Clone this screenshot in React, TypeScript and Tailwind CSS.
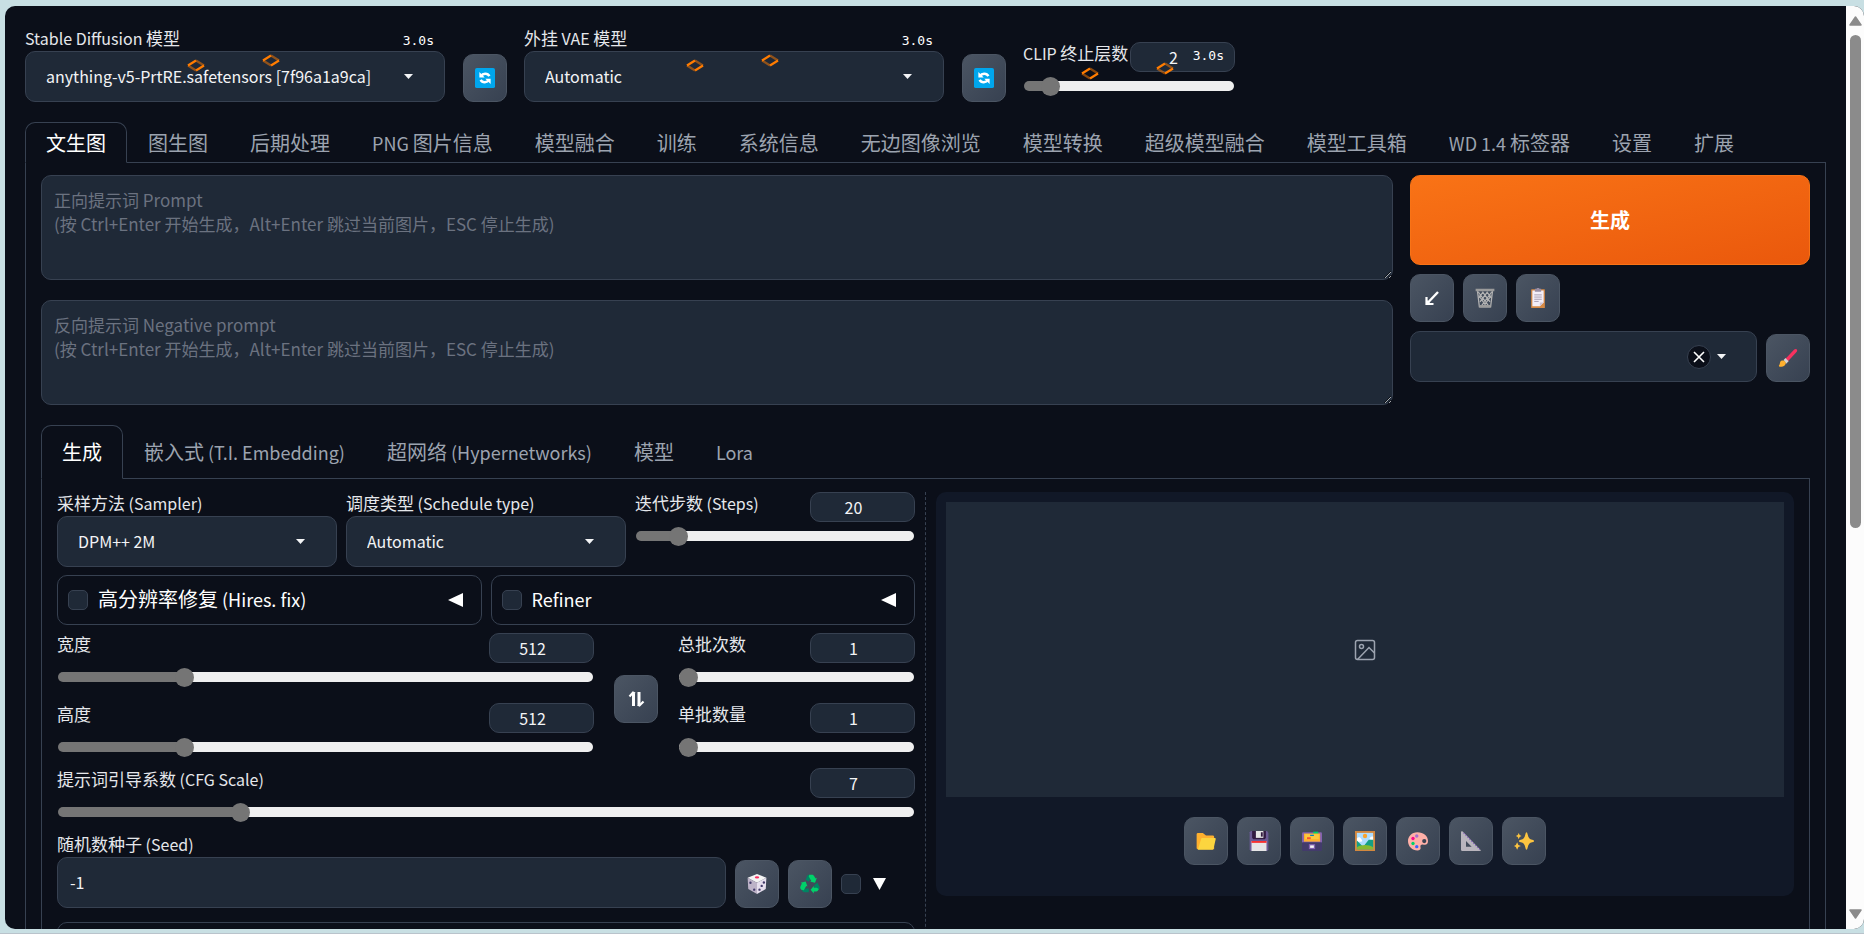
import { type ReactNode, useId, useState } from 'react'

const LATIN = /([\x20-\x7e]+)/

interface MixedProps {
  text: string
  latin?: string
}

// Latin runs sit a touch smaller than the Chinese characters around them
function Mixed({ text, latin = 'text-[16px]' }: MixedProps) {
  return (
    <>
      {text.split(LATIN).map((part, i) =>
        LATIN.test(part) ? (
          <span key={i} className={`${latin} whitespace-pre`}>
            {part}
          </span>
        ) : (
          part
        ),
      )}
    </>
  )
}

function RefreshIcon() {
  return (
    <svg viewBox="0 0 32 32" className="size-5">
      <rect width="32" height="32" rx="3" fill="#00a6ed" />
      <g fill="none" stroke="#fff" strokeWidth="4">
        <path d="M10 12.5C12 9 20 7.500 23 13" />
        <path d="M22 19.500C20 23 12 24.500 9 19" />
      </g>
      <path d="M7 6.500V15h8.500zM25 25.500V17h-8.500z" fill="#fff" />
    </svg>
  )
}

function ArrowDownLeftIcon() {
  return (
    <svg viewBox="0 0 20 20" className="size-5" fill="none" stroke="#fff" strokeWidth="2.400">
      <path d="M16 4L6 14.500" />
      <path d="M4.500 9v7h7" strokeWidth="2.200" />
      <path d="M4 11v5.500h5.500z" fill="#fff" stroke="none" />
    </svg>
  )
}

function TrashIcon() {
  return (
    <svg viewBox="0 0 32 32" className="size-5" fill="none" stroke="#b4b4b4" strokeWidth="2">
      <path d="M4 5l3 25h18l3-25" />
      <path d="M6 12l12 17M5 6l17 23M12 6l12 16M19 6l7 10M26 12L14 29M27 6L10 29M20 6L8 22M13 6L6 16" />
      <path d="M1 3h30M7 29h18" strokeWidth="4" stroke="#9b9b9b" />
    </svg>
  )
}

function ClipboardIcon() {
  return (
    <svg viewBox="0 0 32 32" className="size-5">
      <rect x="5" y="2" width="22" height="30" rx="1" fill="#d68a45" />
      <path d="M7 4h18v19l-6 6H7z" fill="#f3eef8" />
      <path d="M25 23l-6 6v-6z" fill="#cdc4d6" />
      <path d="M11 1h3a2 2 0 0 1 4 0h3v5H11z" fill="#998ea4" />
      <path d="M10 11h12M10 14.500h12M10 18h12M10 21.500h7" stroke="#998ea4" strokeWidth="1.300" />
    </svg>
  )
}

function BrushIcon() {
  return (
    <svg viewBox="0 0 32 32" className="size-5">
      <path d="M12 17L26 2.500c3-2.500 6 .5 4 3.500L16 21z" fill="#f8315f" />
      <path d="M9 19l3-3 5 5-4 4z" fill="#d3d3d3" />
      <path d="M3 30c-2-1-2-2-1-3 2-2 0-5 4-7 4-1 8 3 6 6-2 4-6 4-9 4z" fill="#ffb02e" />
    </svg>
  )
}

function SwapIcon() {
  return (
    <svg viewBox="0 0 20 20" className="size-5" fill="none" stroke="#fff" strokeWidth="3">
      <path d="M7.500 17V5M13 3v12" />
      <path d="M3.500 7.500l3.500-4 2 1M11.500 15.500l2 1 4-4" strokeWidth="2.200" />
    </svg>
  )
}

function DiceIcon() {
  return (
    <svg viewBox="0 0 32 32" className="size-5">
      <path d="M16 0l15 6-15 8L1 6z" fill="#f4f4f4" />
      <path d="M1 6l15 8v18L2 24z" fill="#bdb3c8" />
      <path d="M31 6l-15 8v18l14-8z" fill="#e6dfee" />
      <ellipse cx="16" cy="5.500" rx="3.500" ry="1.800" fill="#f92f60" />
      <g fill="#433b6b">
        <circle cx="5.500" cy="14" r="1.900" />
        <circle cx="11.500" cy="25" r="1.900" />
        <circle cx="27" cy="13.500" r="1.900" />
        <circle cx="23.500" cy="19" r="1.900" />
        <circle cx="20" cy="25" r="1.900" />
      </g>
    </svg>
  )
}

function RecycleIcon() {
  return (
    <svg viewBox="0 0 32 32" className="size-5">
      <path d="M9 9l3-7c1-1 2-1 4-1l3 1-5 10z" fill="#008463" />
      <path d="M15 1h4c2 0 3 1 4 3l2 3 2-1-3 8-8-2 2-1-4-7z" fill="#00d26a" />
      <path d="M23 17l5-3 3 6c1 2 0 4-2 6l-6-1z" fill="#008463" />
      <path d="M30 24c-1 2-2 4-4 4h-4v3l-5-6 5-6v3h5z" fill="#00d26a" />
      <path d="M4 23h10v6H7c-2 0-3-1-4-3z" fill="#008463" />
      <path d="M2 25c-2-2-2-4-1-6l2-4-2-1 8-2 3 8-2-1-4 7z" fill="#00d26a" />
    </svg>
  )
}

function FolderIcon() {
  return (
    <svg viewBox="0 0 32 32" className="size-5">
      <path d="M1 5c0-1 1-2 2-2h8l5 4h11c1 0 2 1 2 2v20H3c-1 0-2-1-2-2z" fill="#ffb02e" />
      <path d="M8 13c0-1 1-2 2-2h20c1 0 2 1 1.500 2L28 28c0 1-1 2-2 2H3z" fill="#fcd53f" />
    </svg>
  )
}

function FloppyIcon() {
  return (
    <svg viewBox="0 0 32 32" className="size-5">
      <path d="M3 0h26l2 3v27l-2 2H3l-2-2V2z" fill="#6b5b95" />
      <path d="M5 0h22v11l-2 2H7l-2-2z" fill="#321b41" />
      <path d="M11 0h12v11H11z" fill="#e6e6e6" />
      <path d="M19 2h3v7h-3z" fill="#321b41" />
      <path d="M4 16h24v16H4z" fill="#e6e6e6" />
      <path d="M4 16h24v3H4z" fill="#f8312f" />
    </svg>
  )
}

function CardBoxIcon() {
  return (
    <svg viewBox="0 0 32 32" className="size-5">
      <rect y="2" width="32" height="17" rx="2" fill="#8361b0" />
      <path d="M18 1h8v4h-8z" fill="#00d26a" />
      <path d="M3 4h26v13H3z" fill="#ffb02e" />
      <path d="M5 5h22v8H5z" fill="#fcc93f" />
      <path d="M13 6h6v2h-6z" fill="#0084ce" />
      <path d="M8 10h6v3H8z" fill="#f8512f" />
      <rect y="18" width="32" height="14" rx="2" fill="#433b6b" />
      <rect x="11" y="21" width="10" height="8" fill="#8361b0" />
      <path d="M13 23h6v4h-6z" fill="#f4f4f4" />
    </svg>
  )
}

function PictureIcon() {
  return (
    <svg viewBox="0 0 32 32" className="size-5">
      <path d="M0 0h32v32H0z" fill="#d3883e" />
      <path d="M3 3h26v26H3z" fill="#aeddff" />
      <path d="M3 12c2-3 6-2 7 1 2 1 2 3 0 4H3zM29 9c-3-1-5 1-6 4l6 2z" fill="#fff" />
      <circle cx="16" cy="8" r="3.500" fill="#f9a32e" />
      <path d="M3 15l10 10 9-11h7v15H3z" fill="#14a085" />
      <path d="M3 26c7-5 19-5 26 0v3H3z" fill="#86b932" />
    </svg>
  )
}

function PaletteIcon() {
  return (
    <svg viewBox="0 0 32 32" className="size-5">
      <path d="M15 2C6 2 0 9 0 16c0 9 7 15 15 15 4 0 6-2 5-5-1-4 2-5 5-4 5 1 7-2 7-6C32 8 25 2 15 2z" fill="#ffb0a8" />
      <circle cx="26" cy="16" r="3.400" fill="#3b4252" />
      <circle cx="14" cy="8" r="2.700" fill="#a56dcf" />
      <circle cx="8" cy="12" r="2.700" fill="#f70a8d" />
      <circle cx="8" cy="20" r="2.700" fill="#00d26a" />
      <circle cx="14" cy="25" r="2.700" fill="#3f5fff" />
    </svg>
  )
}

function TriangleRulerIcon() {
  return (
    <svg viewBox="0 0 32 32" className="size-5">
      <path d="M0 2c0-2 2-2 3-1l28 29c1 1 1 2-1 2H2c-1 0-2-1-2-2zM8 16v9h9z" fill="#b9b5bd" fillRule="evenodd" />
      <path d="M4 3l26 27" stroke="#8d65c5" strokeWidth="1.800" strokeDasharray="2 2.500" />
    </svg>
  )
}

function SparklesIcon() {
  return (
    <svg viewBox="0 0 32 32" className="size-5" fill="#fcc440">
      <path d="M20 2c1 0 1 1 2 4 1 5 3 7 7 8 3 1 3 1 3 2s0 1-3 2c-4 1-6 3-7 8-1 3-1 4-2 4s-1-1-2-4c-1-5-3-7-7-8-3-1-3-1-3-2s0-1 3-2c4-1 6-3 7-8 1-3 1-4 2-4z" />
      <path d="M7.500 3l1.500 3.500L12 8l-3 1.500L7.500 13 6 9.500 3 8l3-1.500zM5 18l2 4.500 4 1.500-4 1.500L5 30l-2-4.500L0 24l3-1.500z" />
    </svg>
  )
}

function Caret() {
  return (
    <svg viewBox="0 0 9 5" className="pointer-events-none h-[5px] w-[9px]">
      <path d="M0 0h9L4.500 5z" fill="#f3f4f6" />
    </svg>
  )
}

function LoaderMark({ className }: { className: string }) {
  return (
    <svg viewBox="0 0 18 13" className={`absolute h-[13px] w-[18px] ${className}`} fill="none" strokeWidth="2.200">
      <path d="M9 1.500l8 5M9 11.500l-8-5" stroke="#ff7c00" strokeOpacity="0.5" />
      <path d="M1 6.500L9 1.500M17 6.500l-8 5" stroke="#ff7c00" />
    </svg>
  )
}

// Two marks and the elapsed time, drawn over a component that is still loading
function Progress({ marks }: { marks: string }) {
  return (
    <div className="pointer-events-none absolute inset-0">
      <div className={`absolute left-1/2 ${marks}`}>
        <LoaderMark className="top-[5px] -left-[48px]" />
        <LoaderMark className="top-0 left-[27px]" />
      </div>
      <span className="absolute top-[6px] right-[11px] font-['DejaVu_Sans_Mono',monospace] text-[13px] leading-4 text-white">
        3.0s
      </span>
    </div>
  )
}

function ToolButton({ label, children }: { label: string; children: ReactNode }) {
  return (
    <button
      type="button"
      aria-label={label}
      className="flex h-12 w-11 shrink-0 items-center justify-center rounded-[10px] border border-[#4b5563] bg-linear-to-br from-[#4b5563] to-[#374151]"
    >
      {children}
    </button>
  )
}

const labelClass = 'block h-6 min-w-0 text-[17px] leading-[22px] whitespace-nowrap text-[#e5e7eb]'

interface DropdownProps {
  label: string
  value: string
  children?: ReactNode
}

function Dropdown({ label, value, children }: DropdownProps) {
  const id = useId()
  return (
    <div className="relative min-w-0 flex-1">
      <label htmlFor={id} className={labelClass}>
        <Mixed text={label} />
      </label>
      <div className="relative">
        <select
          id={id}
          className="block h-[51px] w-full appearance-none rounded-[10px] border border-[#374151] bg-[#1f2937] px-5 pb-[2px] text-[16px] text-[#f3f4f6]"
        >
          <option>{value}</option>
        </select>
        <div className="pointer-events-none absolute inset-y-0 right-8 flex items-center">
          <Caret />
        </div>
      </div>
      {children}
    </div>
  )
}

interface SliderProps {
  label: string
  min: number
  max: number
  initial: number
  className?: string
  children?: ReactNode
}

function Slider({ label, min, max, initial, className = '', children }: SliderProps) {
  const id = useId()
  const [value, setValue] = useState(initial)
  const percent = ((value - min) / (max - min)) * 100

  return (
    <div className={`relative ${className}`}>
      <div className="flex h-[30px] items-start justify-between">
        <label htmlFor={id} className={labelClass}>
          <Mixed text={label} />
        </label>
        <input
          type="number"
          aria-label={label}
          min={min}
          max={max}
          value={value}
          onChange={(e) => setValue(Number(e.target.value))}
          className="h-[30px] w-[105px] shrink-0 [appearance:textfield] rounded-[10px] border border-[#374151] bg-[#1f2937] pr-[18px] text-center text-[16px] text-[#f3f4f6] [&::-webkit-inner-spin-button]:appearance-none"
        />
      </div>
      <div className="mt-[9px] px-px">
        <input
          id={id}
          type="range"
          min={min}
          max={max}
          value={value}
          onChange={(e) => setValue(Number(e.target.value))}
          style={{
            backgroundImage: `linear-gradient(to right, #757575 ${percent}%, #efefef ${percent}%)`,
          }}
          className="block h-[10px] w-full appearance-none rounded-full [&::-webkit-slider-thumb]:size-[19px] [&::-webkit-slider-thumb]:appearance-none [&::-webkit-slider-thumb]:rounded-full [&::-webkit-slider-thumb]:bg-[#757575]"
        />
      </div>
      {children}
    </div>
  )
}

interface TabsProps {
  items: string[]
  tabClass: string
}

function Tabs({ items, tabClass }: TabsProps) {
  const [active, setActive] = useState(items[0])
  return (
    <div role="tablist" className="flex border-b border-[#374151]">
      {items.map((item) => (
        <button
          key={item}
          type="button"
          role="tab"
          aria-selected={item === active}
          onClick={() => setActive(item)}
          className={`-mb-px rounded-t-[10px] border px-5 text-[20px] whitespace-nowrap ${tabClass} ${
            item === active
              ? 'border-[#374151] border-b-[#0b0f19] text-white'
              : 'border-transparent text-[#9ca3af]'
          }`}
        >
          <Mixed text={item} latin="text-[18px]" />
        </button>
      ))}
    </div>
  )
}

const checkboxClass =
  'size-5 shrink-0 appearance-none rounded-[5px] border border-[#374151] bg-[#1f2937] checked:bg-[#ea580c]'

function Accordion({ title }: { title: string }) {
  return (
    <div className="flex h-[50px] flex-1 items-center rounded-[10px] border border-[#374151] px-[10px]">
      <label className="flex flex-1 items-center gap-[10px] text-[20px] text-white">
        <input type="checkbox" className={checkboxClass} />
        <span className="pb-[2px]">
          <Mixed text={title} latin="text-[18px]" />
        </span>
      </label>
      <button type="button" aria-label={title} className="px-2">
        <svg viewBox="0 0 15 14" className="h-[14px] w-[15px]">
          <path d="M15 0v14L0 7z" fill="#fff" />
        </svg>
      </button>
    </div>
  )
}

function Prompt({ name }: { name: string }) {
  return (
    <textarea
      aria-label={name}
      placeholder={`${name}\n(按 Ctrl+Enter 开始生成，Alt+Enter 跳过当前图片，ESC 停止生成)`}
      className="block h-[105px] w-full rounded-[10px] border border-[#374151] bg-[#1f2937] px-3 py-3 text-[17px] leading-6 text-[#f3f4f6] placeholder:text-[#6b7280]"
    />
  )
}

const mainTabs = [
  '文生图',
  '图生图',
  '后期处理',
  'PNG 图片信息',
  '模型融合',
  '训练',
  '系统信息',
  '无边图像浏览',
  '模型转换',
  '超级模型融合',
  '模型工具箱',
  'WD 1.4 标签器',
  '设置',
  '扩展',
]

const networkTabs = ['生成', '嵌入式 (T.I. Embedding)', '超网络 (Hypernetworks)', '模型', 'Lora']

const galleryTools = [
  { label: '打开文件夹', icon: <FolderIcon /> },
  { label: '保存', icon: <FloppyIcon /> },
  { label: '打包下载', icon: <CardBoxIcon /> },
  { label: '发送到图生图', icon: <PictureIcon /> },
  { label: '发送到重绘', icon: <PaletteIcon /> },
  { label: '发送到后期处理', icon: <TriangleRulerIcon /> },
  { label: '高清放大', icon: <SparklesIcon /> },
]

function QuickSettings() {
  return (
    <header className="flex items-end gap-[17px]">
      <div className="flex w-[482px] items-end gap-[18px]">
        <Dropdown label="Stable Diffusion 模型" value="anything-v5-PrtRE.safetensors [7f96a1a9ca]">
          <Progress marks="top-[27px]" />
        </Dropdown>
        <ToolButton label="刷新模型">
          <RefreshIcon />
        </ToolButton>
      </div>
      <div className="flex w-[482px] items-end gap-[18px]">
        <Dropdown label="外挂 VAE 模型" value="Automatic">
          <Progress marks="top-[27px]" />
        </Dropdown>
        <ToolButton label="刷新 VAE">
          <RefreshIcon />
        </ToolButton>
      </div>
      <Slider label="CLIP 终止层数" min={1} max={12} initial={2} className="mb-[11px] w-[212px]">
        <Progress marks="top-5" />
      </Slider>
    </header>
  )
}

function GenerateTools() {
  return (
    <div className="flex w-[400px] shrink-0 flex-col">
      <button
        type="button"
        className="h-[90px] rounded-[10px] border border-[#f97316] bg-linear-to-br from-[#f97316] to-[#ea580c] text-[20px] font-bold text-white"
      >
        生成
      </button>
      <div className="mt-[9px] flex gap-[9px]">
        <ToolButton label="读取参数">
          <ArrowDownLeftIcon />
        </ToolButton>
        <ToolButton label="清空提示词">
          <TrashIcon />
        </ToolButton>
        <ToolButton label="粘贴预设">
          <ClipboardIcon />
        </ToolButton>
      </div>
      <div className="mt-[9px] flex items-end gap-[9px]">
        <div className="relative flex-1">
          <select
            aria-label="预设样式"
            className="block h-[51px] w-full appearance-none rounded-[10px] border border-[#374151] bg-[#1f2937] px-5"
          />
          <div className="absolute inset-y-0 right-[31px] flex items-center gap-[6px]">
            <button
              type="button"
              aria-label="清除"
              className="flex size-6 items-center justify-center rounded-full border border-[#374151] bg-[#0b0f19]"
            >
              <svg viewBox="0 0 12 12" className="size-3" stroke="#fff" strokeWidth="1.600">
                <path d="M1 1l10 10M11 1L1 11" />
              </svg>
            </button>
            <Caret />
          </div>
        </div>
        <ToolButton label="编辑预设">
          <BrushIcon />
        </ToolButton>
      </div>
    </div>
  )
}

function Settings() {
  const seedId = useId()
  return (
    <div className="flex min-w-0 flex-1 flex-col gap-2">
      <div className="flex gap-[9px]">
        <Dropdown label="采样方法 (Sampler)" value="DPM++ 2M" />
        <Dropdown label="调度类型 (Schedule type)" value="Automatic" />
        <Slider label="迭代步数 (Steps)" min={1} max={150} initial={20} className="flex-1" />
      </div>
      <div className="flex gap-[9px]">
        <Accordion title="高分辨率修复 (Hires. fix)" />
        <Accordion title="Refiner" />
      </div>
      <div className="flex items-center gap-5">
        <div className="flex flex-1 flex-col gap-[21px]">
          <Slider label="宽度" min={64} max={2048} initial={512} />
          <Slider label="高度" min={64} max={2048} initial={512} />
        </div>
        <div className="pt-3">
          <ToolButton label="交换宽高">
            <SwapIcon />
          </ToolButton>
        </div>
        <div className="flex w-[237px] flex-col gap-[21px]">
          <Slider label="总批次数" min={1} max={100} initial={1} />
          <Slider label="单批数量" min={1} max={8} initial={1} />
        </div>
      </div>
      <Slider label="提示词引导系数 (CFG Scale)" min={1} max={30} initial={7} className="mt-2" />
      <div className="mt-2 flex items-end gap-[9px]">
        <div className="flex-1">
          <label htmlFor={seedId} className={labelClass}>
            <Mixed text="随机数种子 (Seed)" />
          </label>
          <input
            id={seedId}
            type="text"
            defaultValue="-1"
            className="block h-[51px] w-full rounded-[10px] border border-[#374151] bg-[#1f2937] px-3 pb-[2px] text-[16px] text-[#f3f4f6]"
          />
        </div>
        <ToolButton label="随机种子">
          <DiceIcon />
        </ToolButton>
        <ToolButton label="重用种子">
          <RecycleIcon />
        </ToolButton>
        <label className="flex h-12 w-[74px] items-center gap-3">
          <input type="checkbox" aria-label="更多种子选项" className={checkboxClass} />
          <svg viewBox="0 0 13 12" className="h-[12px] w-[13px]">
            <path d="M0 0h13L6.500 12z" fill="#fff" />
          </svg>
        </label>
      </div>
      <div className="mt-[6px] h-[50px] rounded-[10px] border border-[#374151]" />
    </div>
  )
}

function Gallery() {
  return (
    <div className="min-w-0 flex-1">
      <div className="rounded-[10px] bg-[#111827] px-[10px] pt-[10px] pb-[31px]">
        <div className="flex h-[295px] items-center justify-center bg-[#1f2937]">
          <svg viewBox="0 0 24 24" className="size-6 text-[#9ca3af]" fill="none" stroke="currentColor" strokeWidth="1.500">
            <rect x="2.500" y="2.500" width="19" height="19" rx="2" />
            <circle cx="8.500" cy="8.500" r="2" />
            <path d="M21.500 15l-5.500-5.500L4.500 21.500" />
          </svg>
        </div>
        <div className="mt-5 flex justify-center gap-[9px]">
          {galleryTools.map((tool) => (
            <ToolButton key={tool.label} label={tool.label}>
              {tool.icon}
            </ToolButton>
          ))}
        </div>
      </div>
    </div>
  )
}

function Scrollbar() {
  return (
    <div className="flex w-[18px] shrink-0 flex-col items-center bg-[#fcfcfc] py-[10px]">
      <svg viewBox="0 0 13 10" className="h-[10px] w-[13px]">
        <path d="M6.500 1L12 9H1z" fill="#8b8b8b" stroke="#8b8b8b" strokeWidth="1.500" strokeLinejoin="round" />
      </svg>
      <div className="my-[9px] flex w-[11px] flex-1">
        <div className="h-[57%] w-full rounded-full bg-[#8b8b8b]" />
      </div>
      <svg viewBox="0 0 13 10" className="h-[10px] w-[13px]">
        <path d="M6.500 9L1 1h11z" fill="#8b8b8b" stroke="#8b8b8b" strokeWidth="1.500" strokeLinejoin="round" />
      </svg>
    </div>
  )
}

export default function App() {
  return (
    <div className="h-screen border-b border-[#b9c3cb] bg-[#c8dfe3] pt-[6px] pb-1 pl-[5px] font-['Noto_Sans_CJK_SC',sans-serif]">
      <div className="flex h-full overflow-hidden rounded-[10px] bg-[#0b0f19]">
        <main className="min-w-0 flex-1 overflow-hidden px-5 pt-[21px]">
          <QuickSettings />
          <div className="mt-5">
            <Tabs items={mainTabs} tabClass="h-[41px]" />
            <section className="border-x border-[#374151] px-[15px] pt-3">
              <div className="flex gap-[17px]">
                <div className="flex min-w-0 flex-1 flex-col gap-5">
                  <Prompt name="正向提示词 Prompt" />
                  <Prompt name="反向提示词 Negative prompt" />
                </div>
                <GenerateTools />
              </div>
              <div className="mt-5">
                <Tabs items={networkTabs} tabClass="h-[54px]" />
                <section className="flex gap-[10px] border-x border-[#374151] px-[15px] pt-[13px]">
                  <Settings />
                  <div className="border-l border-dashed border-[#374151]" />
                  <Gallery />
                </section>
              </div>
            </section>
          </div>
        </main>
        <Scrollbar />
      </div>
    </div>
  )
}
